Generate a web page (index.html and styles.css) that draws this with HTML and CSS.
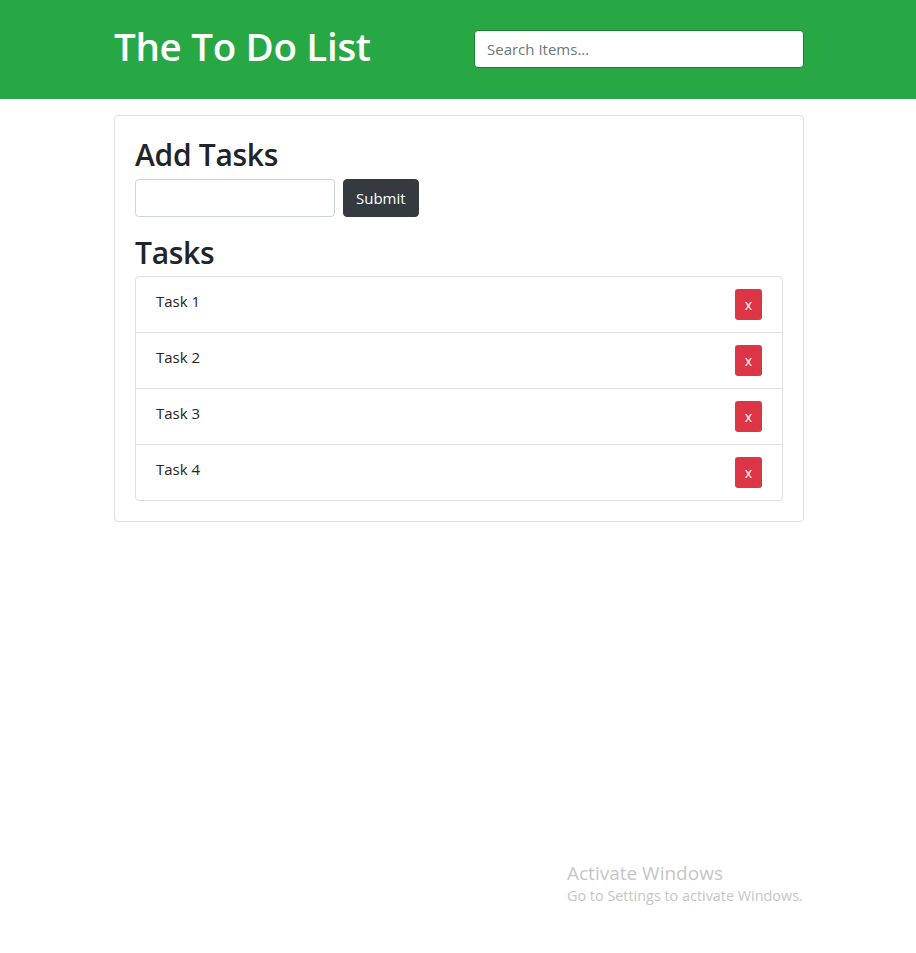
FILE: index.html
```html
<!DOCTYPE html>
<html lang="en">
<head>
<meta charset="utf-8">
<title>The To Do List</title>
<link rel="stylesheet" href="styles.css">
</head>
<body>
<header class="topbar">
  <div class="container topbar-inner">
    <h1 class="title">The To Do List</h1>
    <input class="search" type="text" placeholder="Search Items...">
  </div>
</header>
<main class="container">
  <section class="card">
    <h2 class="heading">Add Tasks</h2>
    <form class="add-form">
      <input class="task-input" type="text">
      <button class="btn-submit" type="button">Submit</button>
    </form>
    <h2 class="heading tasks-heading">Tasks</h2>
    <ul class="list">
      <li class="item"><span>Task 1</span><button class="btn-del" type="button">x</button></li>
      <li class="item"><span>Task 2</span><button class="btn-del" type="button">x</button></li>
      <li class="item"><span>Task 3</span><button class="btn-del" type="button">x</button></li>
      <li class="item"><span>Task 4</span><button class="btn-del" type="button">x</button></li>
    </ul>
  </section>
</main>
<div class="watermark">
  <div class="wm-title">Activate Windows</div>
  <div class="wm-sub">Go to Settings to activate Windows.</div>
</div>
</body>
</html>
```
FILE: styles.css
```css
* { box-sizing: border-box; }
html, body { margin: 0; padding: 0; }
body {
  font-family: "Open Sans", "Noto Sans", sans-serif;
  font-size: 15px;
  color: #212529;
  background: #fff;
}
.container {
  width: 690px;
  margin-left: calc(50% - 344px);
}
.topbar {
  background: #28a745;
  height: 99px;
}
.topbar-inner {
  display: flex;
  align-items: center;
  justify-content: space-between;
  height: 99px;
}
.title {
  margin: 0;
  color: #fff;
  font-size: 38.5px;
  font-weight: 600;
  line-height: 1.2;
  letter-spacing: -0.3px;
  position: relative;
  top: -3px;
}
.search {
  width: 330px;
  height: 38px;
  border: 1px solid #1e7e34;
  border-radius: 4px;
  padding: 6px 12px;
  font-family: inherit;
  font-size: 15px;
  color: #495057;
  position: relative;
  top: -1px;
}
.search::placeholder { color: #6c757d; }
.card {
  margin-top: 16px;
  border: 1px solid #dfdfdf;
  border-radius: 4px;
  padding: 20px;
}
.heading {
  margin: 0;
  font-size: 30px;
  font-weight: 600;
  line-height: 38px;
  letter-spacing: -0.3px;
}
.add-form {
  display: flex;
  gap: 8px;
  margin-top: 5px;
}
.task-input {
  width: 200px;
  height: 38px;
  border: 1px solid #ced4da;
  border-radius: 4px;
}
.btn-submit {
  height: 38px;
  padding: 0 12px;
  background: #343a40;
  color: #fff;
  border: 1px solid #343a40;
  border-radius: 4px;
  font-family: inherit;
  font-size: 15px;
}
.tasks-heading { margin-top: 17px; margin-bottom: 4px; }
.list {
  list-style: none;
  margin: 0;
  padding: 0;
  border: 1px solid #dfdfdf;
  border-radius: 4px;
}
.item {
  display: flex;
  justify-content: space-between;
  align-items: flex-start;
  height: 56px;
  padding: 12px 20px;
  border-bottom: 1px solid #dfdfdf;
}
.item:last-child { border-bottom: none; height: 55px; }
.item span { line-height: 24px; }
.btn-del {
  width: 27px;
  height: 31px;
  padding: 0;
  background: #dc3545;
  color: #fff;
  border: none;
  border-radius: 3px;
  font-family: inherit;
  font-size: 14px;
}
.watermark {
  position: absolute;
  left: 567px;
  top: 860px;
  color: #c6c6c6;
}
.wm-title { font-size: 19px; line-height: 26px; }
.wm-sub { font-size: 14.4px; line-height: 20px; }
```
